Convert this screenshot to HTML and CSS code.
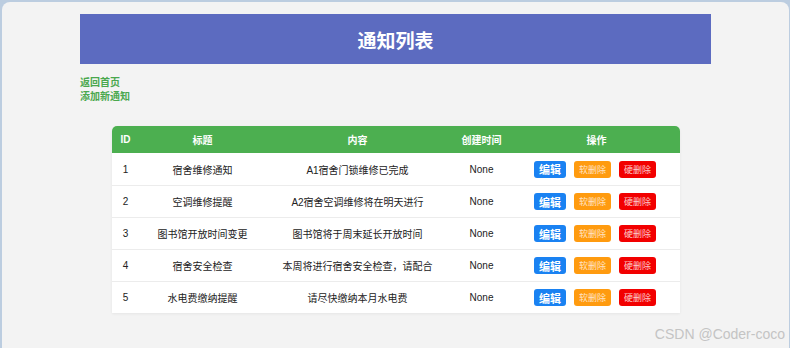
FILE: index.html
```html
<!DOCTYPE html>
<html lang="zh">
<head>
    <meta charset="UTF-8">
    <title>通知列表</title>
    <link rel="stylesheet" href="styles.css">
</head>
<body>
    <div class="window">
        <div class="page">
            <div class="page-header">
                <h1>通知列表</h1>
            </div>

            <div class="links">
                <a href="#">返回首页</a>
                <a href="#">添加新通知</a>
            </div>

            <table class="notice-table">
                <colgroup>
                    <col class="col-id">
                    <col class="col-title">
                    <col class="col-content">
                    <col class="col-time">
                    <col class="col-ops">
                </colgroup>
                <thead>
                    <tr>
                        <th>ID</th>
                        <th>标题</th>
                        <th>内容</th>
                        <th>创建时间</th>
                        <th>操作</th>
                    </tr>
                </thead>
                <tbody>
                    <tr>
                        <td>1</td>
                        <td>宿舍维修通知</td>
                        <td>A1宿舍门锁维修已完成</td>
                        <td>None</td>
                        <td class="ops">
                            <button class="btn btn-edit">编辑</button>
                            <button class="btn btn-soft">软删除</button>
                            <button class="btn btn-hard">硬删除</button>
                        </td>
                    </tr>
                    <tr>
                        <td>2</td>
                        <td>空调维修提醒</td>
                        <td>A2宿舍空调维修将在明天进行</td>
                        <td>None</td>
                        <td class="ops">
                            <button class="btn btn-edit">编辑</button>
                            <button class="btn btn-soft">软删除</button>
                            <button class="btn btn-hard">硬删除</button>
                        </td>
                    </tr>
                    <tr>
                        <td>3</td>
                        <td>图书馆开放时间变更</td>
                        <td>图书馆将于周末延长开放时间</td>
                        <td>None</td>
                        <td class="ops">
                            <button class="btn btn-edit">编辑</button>
                            <button class="btn btn-soft">软删除</button>
                            <button class="btn btn-hard">硬删除</button>
                        </td>
                    </tr>
                    <tr>
                        <td>4</td>
                        <td>宿舍安全检查</td>
                        <td>本周将进行宿舍安全检查，请配合</td>
                        <td>None</td>
                        <td class="ops">
                            <button class="btn btn-edit">编辑</button>
                            <button class="btn btn-soft">软删除</button>
                            <button class="btn btn-hard">硬删除</button>
                        </td>
                    </tr>
                    <tr>
                        <td>5</td>
                        <td>水电费缴纳提醒</td>
                        <td>请尽快缴纳本月水电费</td>
                        <td>None</td>
                        <td class="ops">
                            <button class="btn btn-edit">编辑</button>
                            <button class="btn btn-soft">软删除</button>
                            <button class="btn btn-hard">硬删除</button>
                        </td>
                    </tr>
                </tbody>
            </table>
        </div>

        <div class="watermark">CSDN @Coder-coco</div>
    </div>
</body>
</html>
```

FILE: styles.css
```css
body {
    margin: 0;
    background: #bccde0;
    font-family: 'Liberation Sans', 'Noto Sans CJK SC', sans-serif;
    color: #222;
}

.window {
    position: relative;
    margin: 2px 1px 0 2px;
    height: 346px;
    background: #f3f3f3;
    border-radius: 8px 8px 0 0;
    padding-top: 12px;
    box-sizing: border-box;
    overflow: hidden;
}

.page {
    width: 631px;
    margin-left: 78px;
}

.page-header {
    height: 50px;
    background: #5c6bc0;
    display: flex;
    align-items: center;
    justify-content: center;
}

.page-header h1 {
    margin: 0;
    color: #fff;
    font-size: 19px;
    font-weight: bold;
}

.links {
    margin-top: 12px;
    display: flex;
    flex-direction: column;
    align-items: flex-start;
}

.links a {
    color: #4aa84e;
    font-size: 10px;
    font-weight: bold;
    line-height: 14px;
    text-decoration: none;
}

.notice-table {
    width: 568px;
    margin: 22px auto 0;
    table-layout: fixed;
    border-collapse: separate;
    border-spacing: 0;
    background: #fff;
    font-size: 10px;
    box-shadow: 0 1px 3px rgba(0, 0, 0, 0.06);
    border-radius: 5px 5px 0 0;
}

.col-id { width: 28px; }
.col-title { width: 126px; }
.col-content { width: 184px; }
.col-time { width: 64px; }
.col-ops { width: 166px; }

.notice-table th {
    background: #4caf50;
    color: #fff;
    font-weight: bold;
    height: 27px;
    padding: 0;
    text-align: center;
}

.notice-table th:first-child { border-top-left-radius: 5px; }
.notice-table th:last-child { border-top-right-radius: 5px; }

.notice-table td {
    height: 31px;
    padding: 0;
    text-align: center;
    white-space: nowrap;
    border-bottom: 1px solid #ececec;
}

.notice-table tbody tr:first-child td { height: 32px; }
.notice-table tbody tr:last-child td { border-bottom: none; }

.notice-table td.ops {
    font-size: 0;
    padding-right: 3px;
}

.btn {
    display: inline-block;
    vertical-align: middle;
    height: 17px;
    border: none;
    border-radius: 3px;
    padding: 0;
    margin: 0 4px;
    color: #fff;
    font-family: 'Liberation Sans', 'Noto Sans CJK SC', sans-serif;
    cursor: pointer;
}

.btn-edit {
    width: 32px;
    background: #1a82f2;
    font-size: 11px;
    font-weight: bold;
}

.btn-soft {
    width: 37px;
    background: #ff9b0f;
    color: rgba(255, 255, 255, 0.75);
    font-size: 9px;
}

.btn-hard {
    width: 37px;
    background: #f20000;
    color: rgba(255, 255, 255, 0.8);
    font-size: 9px;
}

.watermark {
    position: absolute;
    right: 4px;
    bottom: 6px;
    color: #c4c4c4;
    font-size: 14px;
    font-family: 'Liberation Sans', sans-serif;
}
```
